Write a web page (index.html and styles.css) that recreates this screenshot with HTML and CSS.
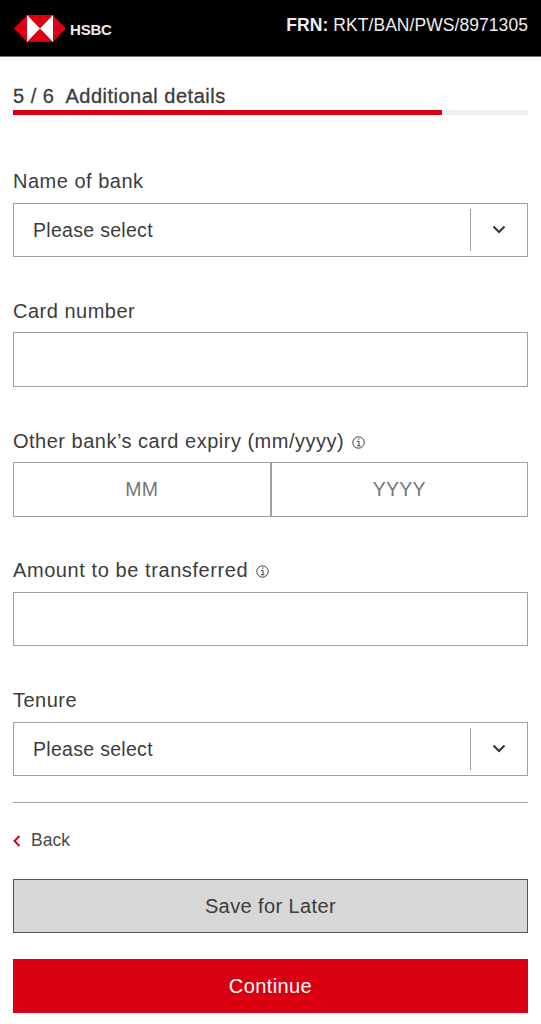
FILE: index.html
```html
<!DOCTYPE html>
<html lang="en">
<head>
<meta charset="utf-8">
<title>HSBC application</title>
<link rel="stylesheet" href="styles.css">
</head>
<body>
<header class="topbar">
  <div class="brand">
    <svg class="logo" viewBox="0 0 52 27" aria-hidden="true">
      <polygon fill="#db0011" points="0,13.5 13,0 39,0 52,13.5 39,27 13,27"/>
      <polygon fill="#fff" points="13,0 26,13.5 13,27"/>
      <polygon fill="#fff" points="39,0 26,13.5 39,27"/>
    </svg>
    <span class="wordmark">HSBC</span>
  </div>
  <div class="ref"><b>FRN:</b> RKT/BAN/PWS/8971305</div>
</header>
<main class="page">
  <div class="step">5 / 6&nbsp; Additional details</div>
  <div class="progress"><div class="progress-fill" style="width:83.3%"></div></div>

  <div class="field first">
    <div class="label">Name of bank</div>
    <div class="box select"><span class="value">Please select</span><span class="caret"><svg viewBox="0 0 14 9" aria-hidden="true"><path d="M1.5 1.5 7 7l5.5-5.5"/></svg></span></div>
  </div>
  <div class="field">
    <div class="label">Card number</div>
    <div class="box"></div>
  </div>
  <div class="field">
    <div class="label">Other bank’s card expiry (mm/yyyy) <svg class="info" viewBox="0 0 13 13" aria-hidden="true"><circle cx="6.5" cy="6.5" r="5.7"/><path d="M5 5.4H7V9.8M5 9.8H8.6M6 3H7.4"/></svg></div>
    <div class="split">
      <div class="box ph">MM</div>
      <div class="box ph">YYYY</div>
    </div>
  </div>
  <div class="field">
    <div class="label long">Amount to be transferred <svg class="info" viewBox="0 0 13 13" aria-hidden="true"><circle cx="6.5" cy="6.5" r="5.7"/><path d="M5 5.4H7V9.8M5 9.8H8.6M6 3H7.4"/></svg></div>
    <div class="box"></div>
  </div>
  <div class="field">
    <div class="label">Tenure</div>
    <div class="box select"><span class="value">Please select</span><span class="caret"><svg viewBox="0 0 14 9" aria-hidden="true"><path d="M1.5 1.5 7 7l5.5-5.5"/></svg></span></div>
  </div>

  <hr class="rule">
  <div class="back"><svg viewBox="0 0 8 12" aria-hidden="true"><path d="M6.5 1 1.5 6l5 5"/></svg><span>Back</span></div>
  <div class="btn secondary">Save for Later</div>
  <div class="btn primary">Continue</div>
</main>
</body>
</html>
```
FILE: styles.css
```css
* { box-sizing: border-box; }
html, body { margin: 0; padding: 0; background: #fff; }
body {
  font-family: "Liberation Sans", Arial, sans-serif;
  color: #3c3c3c;
  width: 541px;
  height: 1024px;
  overflow: hidden;
}
.topbar {
  height: 57px;
  background: #000;
  border-bottom: 1px solid #767676;
  display: flex;
  align-items: center;
  justify-content: space-between;
  padding: 0 13px 0 14px;
}
.brand { display: flex; align-items: center; gap: 4px; }
.logo { width: 52px; height: 27px; display: block; }
.wordmark { color: #ededed; font-size: 15px; font-weight: 700; letter-spacing: -0.2px; margin-top: 2px; }
.ref { color: #eee; font-size: 17.5px; letter-spacing: 0.06px; margin-top: -6px; }
.ref b { font-weight: 700; }
.page { padding: 0 13px; }
.step { font-size: 20px; letter-spacing: 0.5px; line-height: 24px; margin-top: 27px; -webkit-text-stroke: 0.3px #3c3c3c; }
.progress { height: 5px; background: #ededed; margin-top: 2px; }
.progress-fill { height: 100%; background: #db0011; }
.field { margin-top: 42.25px; }
.field.first { margin-top: 54.6px; }
.label { font-size: 20px; letter-spacing: 0.5px; line-height: 22px; margin-bottom: 10px; height: 23px; display: flex; align-items: center; gap: 8px; }
.label.long { letter-spacing: 0.58px; }
.box {
  height: 54.5px;
  border: 1px solid #a0a0a0;
  background: #fff;
  display: flex;
  align-items: center;
}
.select { padding-left: 19px; justify-content: space-between; }
.value { font-size: 19.5px; letter-spacing: 0.3px; padding-top: 1px; }
.caret {
  width: 57px;
  height: 42px;
  border-left: 1px solid #a0a0a0;
  display: flex;
  align-items: center;
  justify-content: center;
  flex: none;
}
.caret svg { width: 14px; height: 9px; fill: none; stroke: #333; stroke-width: 2; }
.split { display: grid; grid-template-columns: 1fr 1fr; }
.ph { justify-content: center; color: #767676; font-size: 19.5px; letter-spacing: 0.3px; }
.info { width: 13px; height: 13px; fill: none; stroke: #3c3c3c; stroke-width: 1; margin-top: 3px; flex: none; }
.rule { border: 0; border-top: 1px solid #a0a0a0; margin: 25.9px 0 0; }
.back { display: flex; align-items: center; gap: 10px; height: 22px; margin-top: 27px; font-size: 17.5px; color: #4a4a4a; }
.back svg { width: 8px; height: 12px; fill: none; stroke: #db0011; stroke-width: 2; }
.btn {
  height: 54.5px;
  display: flex;
  align-items: center;
  justify-content: center;
  font-size: 20px;
  letter-spacing: 0.4px;
}
.secondary { margin-top: 27px; background: #d7d7d7; border: 1px solid #555; color: #3c3c3c; }
.primary { margin-top: 25.5px; background: #db0011; color: #fff; }
```
